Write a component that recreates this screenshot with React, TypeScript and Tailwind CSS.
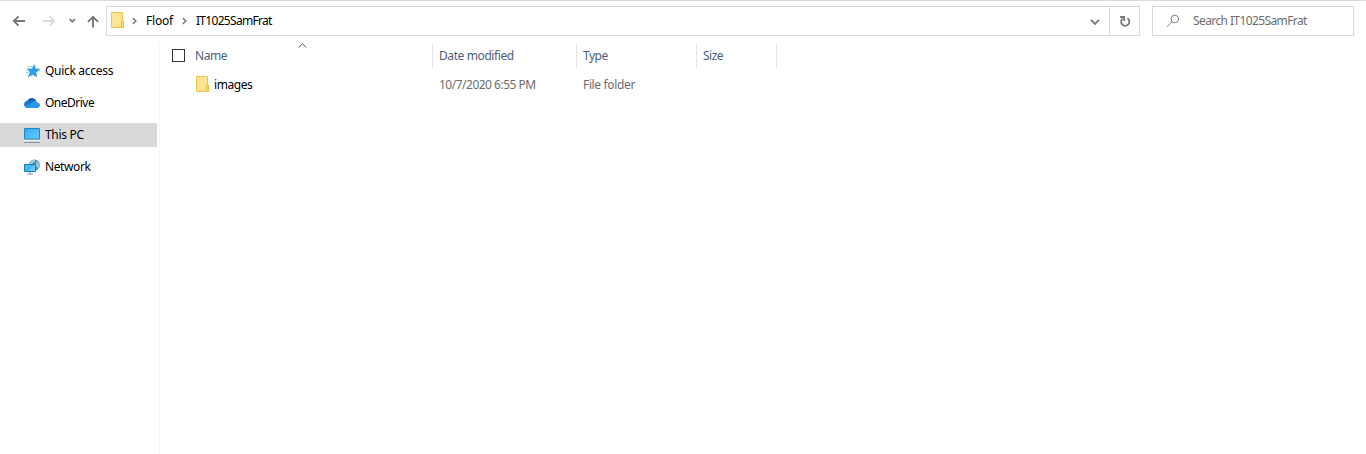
import type { ReactNode } from "react";

function FolderIcon() {
  return (
    <svg width="14" height="18" viewBox="0 0 14 18" className="shrink-0">
      <path d="M.5 .5h11v9h1v6H.5z" fill="#ffe493" stroke="#e9c34e" />
      <path d="M10.5 15.5v-6h2v6z" fill="#fbd768" stroke="#e9c34e" />
    </svg>
  );
}

function Crumb() {
  return (
    <svg width="5" height="8" viewBox="0 0 5 8" className="shrink-0">
      <path d="M.8 1l3 3-3 3" fill="none" stroke="#777" strokeWidth="1.5" />
    </svg>
  );
}

function StarIcon() {
  return (
    <svg width="16" height="16" viewBox="0 0 16 16">
      <path d="M3.5 3.5h5.3M2.8 5.5h4M2 9.5h3M2.4 11.5h2" stroke="#8ccbf0" strokeWidth=".8" />
      <path d="M10.3 1.8l.9 4 4.6.6-3.9 2.8.8 4.6-3.7-2.4-4.6 2.3 1.9-4.5L3.6 6.4l4.5-.5z" fill="#2ba0e8" stroke="#1b8ad6" strokeWidth=".6" />
    </svg>
  );
}

function CloudIcon() {
  return (
    <svg width="16" height="16" viewBox="0 0 16 16">
      <path d="M3 6.5C4.3 2 10.8 1.7 12.3 6.2L9 9z" fill="#1062b5" />
      <path d="M3.6 13C-1.2 12.5-.9 6.2 3.5 5.8c1.9-.1 3.4.8 5 2.2z" fill="#1678ce" />
      <path d="M8 8c1.1-2.4 4.1-2.7 5.2-.4 3.7.2 3.7 5.2 0 5.4H3.5c-1.2 0-2.2-.6-2.8-1.5z" fill="#2598e6" />
    </svg>
  );
}

function ComputerIcon() {
  return (
    <svg width="16" height="16" viewBox="0 0 16 16">
      <defs>
        <linearGradient id="screen" x2="1" y2="1">
          <stop stopColor="#2ea9f4" />
          <stop offset="1" stopColor="#71ccff" />
        </linearGradient>
      </defs>
      <path d="M.5 1.5h15v10.5H.5z" fill="url(#screen)" stroke="#2583bd" />
      <path d="M0 13.5h16" stroke="#e9edf0" />
      <path d="M0 15.5h16" stroke="#8096a7" />
    </svg>
  );
}

function NetworkIcon() {
  return (
    <svg width="16" height="16" viewBox="0 0 16 16">
      <circle cx="10.4" cy="6" r="5.5" fill="#4b91bb" />
      <path d="M5.3 4C6.3 2 8.3.9 10.2.8l1.3 1.4-2.3 1.1-.7 2L6 5.2zM12.5 2.5l2 .6 1 3.4-1.8 2.7-1.7-2.5z" fill="#a8c9d8" />
      <path d="M.5 5.5h11v7H.5z" fill="#45b5f3" stroke="#197bb8" />
      <path d="M11 6v6H4z" fill="#6fcafb" />
      <path d="M6 13v2M3 15.2h6" stroke="#7d9bb0" />
    </svg>
  );
}

function NavItem({ icon, label, spacing, selected }: { icon: ReactNode; label: string; spacing: string; selected?: boolean }) {
  return (
    <div className={`flex h-6 w-[157px] items-center gap-[5px] pl-6 ${selected ? "bg-[#d9d9d9]" : ""}`}>
      {icon}
      <span className={`text-black ${spacing}`}>{label}</span>
    </div>
  );
}

export default function App() {
  return (
    <div className="flex h-[454px] w-full flex-col overflow-hidden border-t border-[#d9d9d9] bg-white font-['Noto_Sans',sans-serif] text-[12px] leading-4 whitespace-nowrap text-black">
      <header className="flex h-[42px] shrink-0 pt-[5px] pr-3">
        <div className="flex h-[30px] w-[106px] shrink-0 items-center">
          <svg width="106" height="30" viewBox="0 0 106 30" fill="none" strokeWidth="1.8">
            <path d="M25 15H14M18.5 10.3L13.8 15l4.7 4.7" stroke="#757575" />
            <path d="M43 15h11M49.5 10.3l4.7 4.7-4.7 4.7" stroke="#dadada" />
            <path d="M69.7 13.2l2.6 2.4 2.6-2.4" stroke="#777" />
            <path d="M93 21.5V11M88 15.8l5-5 5 5" stroke="#757575" strokeWidth="1.9" />
          </svg>
        </div>
        <div className="flex h-[30px] min-w-0 flex-1 border border-[#d9d9d9]">
          <div className="flex flex-1 items-center pl-1">
            <FolderIcon />
            <span className="ml-[7px] flex"><Crumb /></span>
            <span className="ml-[9px] w-[27px] tracking-[-0.2px]">Floof</span>
            <span className="ml-[9px] flex"><Crumb /></span>
            <span className="ml-[9px] tracking-[-0.7px]">IT1025SamFrat</span>
          </div>
          <div className="flex w-[29px] items-center justify-center">
            <svg width="12" height="10" viewBox="0 0 12 10"><path d="M2 3.8l4 4 4-4" fill="none" stroke="#777" strokeWidth="1.9" /></svg>
          </div>
          <div className="flex w-[30px] items-center justify-center border-l border-[#d9d9d9]">
            <svg width="12" height="14" viewBox="0 0 12 14" fill="none" stroke="#757575" strokeWidth="1.8">
              <path d="M8.5 4.3A4.1 4.1 0 1 1 3.6 4.6M1.2 3h4v4" />
            </svg>
          </div>
        </div>
        <div className="ml-3 flex h-[30px] w-[202px] shrink-0 items-center border border-[#d9d9d9] pl-[13px]">
          <svg width="14" height="14" viewBox="0 0 14 14" fill="none" stroke="#7d7d7d">
            <circle cx="8.8" cy="5" r="3.8" />
            <path d="M6 7.8L1 12.8" />
          </svg>
          <span className="ml-[13px] tracking-[-0.6px] text-[#6d6d6d]">Search IT1025SamFrat</span>
        </div>
      </header>
      <div className="flex min-h-0 flex-1">
        <nav className="flex w-[160px] shrink-0 flex-col gap-2 border-r border-[#f5f5f5] pt-[16px]">
          <NavItem icon={<StarIcon />} label="Quick access" spacing="tracking-[-0.3px]" />
          <NavItem icon={<CloudIcon />} label="OneDrive" spacing="tracking-[-0.5px]" />
          <NavItem icon={<ComputerIcon />} label="This PC" spacing="tracking-[-0.3px]" selected />
          <NavItem icon={<NetworkIcon />} label="Network" spacing="tracking-[-0.4px]" />
        </nav>
        <main className="flex flex-1 flex-col">
          <div className="flex h-[25px] text-[#4c607a]">
            <div className="relative flex w-[273px] items-center border-r border-[#e5e5e5] pl-3">
              <span className="h-[13px] w-[13px] border border-[#333]" />
              <span className="ml-[10px] tracking-[-0.4px]">Name</span>
              <svg width="9" height="6" viewBox="0 0 9 6" className="absolute top-0 left-[138px]"><path d="M.7 4.5l3.8-3.7 3.8 3.7" fill="none" stroke="#555" /></svg>
            </div>
            <div className="flex w-[144px] items-center border-r border-[#e5e5e5] pl-1.5"><span className="tracking-[-0.4px]">Date modified</span></div>
            <div className="flex w-[120px] items-center border-r border-[#e5e5e5] pl-1.5"><span className="tracking-[-0.5px]">Type</span></div>
            <div className="flex w-[80px] items-center border-r border-[#e5e5e5] pl-1.5"><span className="tracking-[-0.5px]">Size</span></div>
          </div>
          <div className="mt-[6px] flex h-[22px] items-center text-[#6d6d6d]">
            <div className="flex w-[273px] items-center gap-1 pl-9 text-black"><FolderIcon /><span className="tracking-[-0.45px]">images</span></div>
            <div className="w-[144px] pl-1.5"><span className="tracking-[-0.5px]">10/7/2020 6:55 PM</span></div>
            <div className="pl-1.5"><span className="tracking-[-0.35px]">File folder</span></div>
          </div>
        </main>
      </div>
    </div>
  );
}
